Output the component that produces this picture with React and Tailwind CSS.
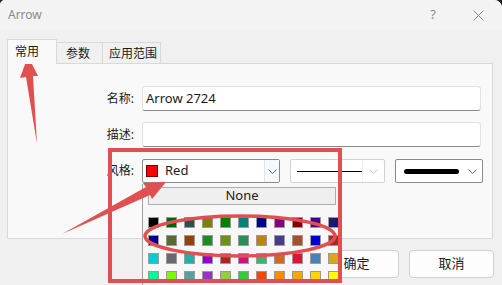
const palette = [
  ['#000000', '#006400', '#2f4f4f', '#808000', '#008000', '#008080', '#000080', '#800080', '#800000', '#4b0082', '#191970'],
  ['#00008b', '#556b2f', '#8b4513', '#228b22', '#6b8e23', '#2e8b57', '#b8860b', '#483d8b', '#a0522d', '#0000cd', '#a52a2a'],
  ['#00ced1', '#696969', '#20b2aa', '#9400d3', '#b22222', '#c71585', '#3cb371', '#d2691e', '#dc143c', '#4682b4', '#daa520'],
  ['#00fa9a', '#7cfc00', '#5f9ea0', '#9932cc', '#9acd32', '#32cd32', '#ff4500', '#ff8c00', '#ffa500', '#ffd700', '#ffff00'],
];

const font = { fontFamily: '"Noto Sans", "Noto Sans CJK SC", sans-serif' };

function Chevron({ light }) {
  return (
    <svg width="9" height="5" viewBox="0 0 9 5" fill="none" stroke={light ? '#c4c4c4' : '#606060'} strokeWidth="1">
      <polyline points="0.5,0.5 4.5,4.5 8.5,0.5" />
    </svg>
  );
}

function TextRow({ label, value, className = '' }) {
  return (
    <div className={`flex items-center pl-[92px] ${className}`}>
      <div className="w-[42px] pr-[8px] text-right text-[12px] text-[#1a1a1a]">{label}</div>
      <div className="w-[339px] h-[25px] bg-white border border-[#e2e2e2] border-b-[#8a8a8a] rounded-[3px] flex items-center pl-[3px] text-[13px] text-[#1a1a1a]">
        {value}
      </div>
    </div>
  );
}

export default function App() {
  return (
    <div className="w-[502px] h-[285px] bg-[#202020] overflow-hidden" style={font}>
      <div className="relative w-full h-full bg-[#f0f0f0] rounded-tl-[5px] rounded-tr-[8px] overflow-hidden">
        {/* title bar */}
        <div className="h-[30px] bg-[#f3f3f3] flex items-center justify-between pl-[8px] pr-[18px] text-[#8a8a8a]">
          <span className="text-[12px]">Arrow</span>
          <div className="flex items-center gap-[37px]">
            <span className="text-[13px]">?</span>
            <svg width="11" height="11" viewBox="0 0 11 11" stroke="#8a8a8a" strokeWidth="1">
              <line x1="0.5" y1="0.5" x2="10.5" y2="10.5" />
              <line x1="10.5" y1="0.5" x2="0.5" y2="10.5" />
            </svg>
          </div>
        </div>

        {/* tabs */}
        <div className="flex items-end ml-[7px] mt-[9px] text-[12px] text-[#1a1a1a]">
          <div className="relative z-10 w-[50px] h-[25px] -mb-px bg-[#f9f9f9] border border-[#d9d9d9] border-b-0 pl-[7px] pt-[3px]">常用</div>
          <div className="w-[46px] h-[21px] bg-[#f0f0f0] border border-[#d9d9d9] border-l-0 border-b-0 pl-[9px] pt-[2px]">参数</div>
          <div className="w-[58px] h-[21px] bg-[#f0f0f0] border border-[#d9d9d9] border-l-0 border-b-0 pl-[6px] pt-[2px]">应用范围</div>
        </div>

        {/* panel */}
        <div className="ml-[7px] w-[486px] h-[176px] bg-[#f9f9f9] border border-[#d9d9d9] pt-[22px]">
          <TextRow label="名称:" value="Arrow 2724" />
          <TextRow label="描述:" value="" className="mt-[11px]" />
          <div className="flex items-center pl-[92px] mt-[12px]">
            <div className="w-[42px] pr-[8px] text-right text-[12px] text-[#1a1a1a]">风格:</div>
            <div className="w-[138px] h-[24px] bg-white border border-[#8a8a8a] rounded-[2px] flex items-center">
              <div className="w-[12px] h-[12px] ml-[3px] bg-[#ff0000] border border-[#7a0000]" />
              <span className="ml-[7px] text-[13px] text-[#1a1a1a]">Red</span>
              <div className="ml-auto w-[15px] h-full border-l border-[#e4e4e4] bg-[#f7fafd] flex items-center justify-center">
                <Chevron />
              </div>
            </div>
            <div className="ml-[10px] w-[95px] h-[24px] bg-white border border-[#d2d2d2] rounded-[2px] flex items-center">
              <div className="ml-[6px] w-[65px] h-px bg-black" />
              <div className="ml-auto w-[22px] h-full border-l border-[#f0f0f0] flex items-center justify-center">
                <Chevron light />
              </div>
            </div>
            <div className="ml-[10px] w-[88px] h-[24px] bg-white border border-[#8a8a8a] rounded-[2px] flex items-center">
              <div className="ml-[8px] w-[55px] h-[5px] rounded-full bg-black" />
              <div className="ml-auto mr-[5px] flex items-center">
                <Chevron />
              </div>
            </div>
          </div>
        </div>

        {/* buttons */}
        <div className="flex justify-end gap-[10px] mt-[11px] pr-[8px]">
          <button className="w-[85px] h-[28px] bg-[#fdfdfd] border border-[#d0d0d0] rounded-[4px] text-[13px] text-[#1a1a1a]">确定</button>
          <button className="w-[85px] h-[28px] bg-[#fdfdfd] border border-[#d0d0d0] rounded-[4px] text-[13px] text-[#1a1a1a]">取消</button>
        </div>

        {/* color dropdown popup */}
        <div className="absolute left-[142px] top-[184px] w-[200px] h-[101px] bg-[#f7f7f7] border-l border-[#a0a0a0] pl-[5px] pt-[3px]">
          <div className="w-[188px] h-[18px] bg-[#efefef] border border-[#adadad] flex items-center justify-center text-[13px] text-[#1a1a1a]">None</div>
          <div className="mt-[12px] grid grid-cols-[repeat(11,11px)] gap-x-[7px] gap-y-[7px]">
            {palette.flat().map((c, i) => (
              <div key={i} className="w-[11px] h-[11px] border border-[#9a9a9a]" style={{ backgroundColor: c }} />
            ))}
          </div>
        </div>

        {/* red annotations */}
        <svg className="absolute inset-0 pointer-events-none" width="502" height="285" viewBox="0 0 502 285">
          <polygon points="28,56 38,76 33,76 37,144 26,77 20,78" fill="#e05050" />
          <rect x="110" y="150" width="230" height="131" fill="none" stroke="#e05050" strokeWidth="4" />
          <polygon points="166,182 152,199 150,195 62,234 146,187 143,183" fill="#e05050" />
          <ellipse cx="240" cy="236" rx="95" ry="20" fill="none" stroke="#e05050" strokeWidth="3.5" />
        </svg>
      </div>
    </div>
  );
}
